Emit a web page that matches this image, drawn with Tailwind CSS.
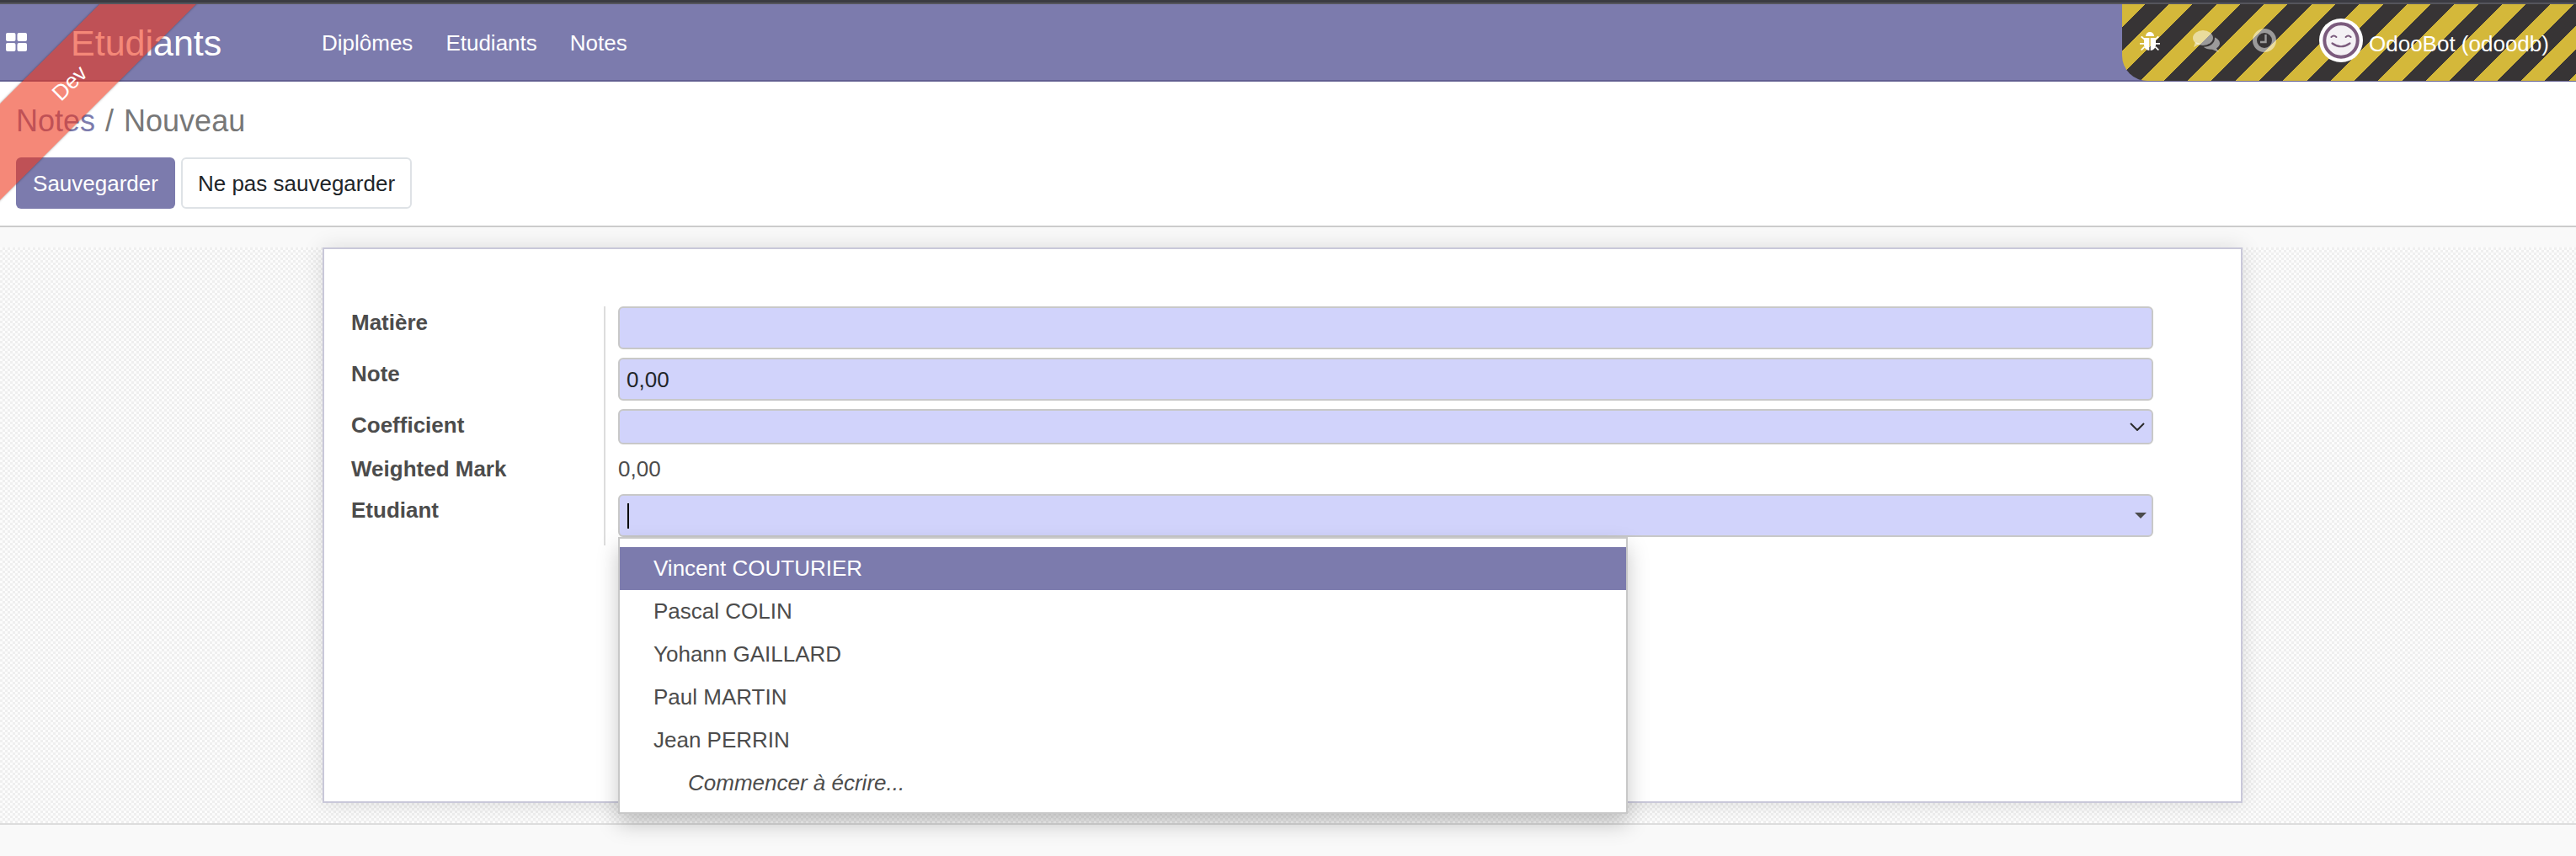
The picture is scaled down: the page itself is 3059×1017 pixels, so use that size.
<!DOCTYPE html>
<html lang="fr">
<head>
    <meta charset="UTF-8">
    <title>Notes / Nouveau</title>
    <script src="https://cdn.jsdelivr.net/npm/@tailwindcss/browser@4"></script>
</head>
<body class="relative h-[1017px] overflow-hidden bg-[#f9f9f9] font-['Liberation_Sans',Arial,sans-serif] text-[26px] text-[#4c4c4c]">
    <!-- top edge -->
    <div class="relative z-20 h-[5px] bg-[#3b3b42] border-b-2 border-[#55555c]"></div>

    <!-- navbar -->
    <header class="flex h-[92px] items-center border-b-2 border-[#625f91] bg-[#7c7bad] text-white">
        <svg class="ml-[7px] h-[22px] w-[25px] shrink-0" viewBox="0 0 25 22" fill="#fff">
            <rect x="0" y="0" width="11.5" height="10" rx="2"/>
            <rect x="13.5" y="0" width="11.5" height="10" rx="2"/>
            <rect x="0" y="12" width="11.5" height="10" rx="2"/>
            <rect x="13.5" y="12" width="11.5" height="10" rx="2"/>
        </svg>
        <span class="ml-[52px] w-[298px] pt-[2px] text-[43px] leading-none">Etudiants</span>
        <nav class="flex gap-[39px] pt-[2px] leading-none">
            <a>Diplômes</a>
            <a>Etudiants</a>
            <a>Notes</a>
        </nav>

        <!-- debug stripes -->
        <div class="ml-auto flex h-[92px] w-[539px] items-center rounded-bl-[30px] bg-[image:repeating-linear-gradient(135deg,#d4b83a_0,#d4b83a_20px,#373435_20px,#373435_40px)] pl-[21px]">
            <svg class="h-[24px] w-[24px] shrink-0 -translate-y-[2px]" viewBox="0 0 24 24" fill="#fff">
                <path d="M7 7 A5 5 0 0 1 17 7 Z"/>
                <path d="M5 9 H11.3 V24 C8 24 5 21 5 17 Z"/>
                <path d="M12.7 9 H19 V17 C19 21 16 24 12.7 24 Z"/>
                <path d="M1 8 L2.5 6.8 L6 10 L4.8 11.2 Z M23 8 L21.5 6.8 L18 10 L19.2 11.2 Z M0 15 H5 V16.8 H0 Z M24 15 H19 V16.8 H24 Z M1 23 L5 19 L6.2 20.2 L2.4 24 Z M23 23 L19 19 L17.8 20.2 L21.6 24 Z"/>
            </svg>
            <svg class="ml-[39px] h-[26px] w-[32px] shrink-0 -translate-y-[1px]" viewBox="0 0 32 26" fill="#fff" fill-opacity=".5">
                <ellipse cx="12" cy="9" rx="12" ry="9"/>
                <path d="M3 14 L1 20 L9 16 Z"/>
                <path d="M26 8.5 C29.5 10 32 12.5 32 15.5 C32 18 30.3 20 28 21.3 L31 26 L23 22.8 C19 23 15 21.8 12.7 19.8 C20 20 26.5 15.5 26 8.5 Z"/>
            </svg>
            <svg class="ml-[39px] h-[28px] w-[28px] shrink-0 -translate-y-[2px]" viewBox="0 0 28 28">
                <circle cx="14" cy="14" r="11.5" fill="none" stroke="#fff" stroke-opacity=".5" stroke-width="5"/>
                <path d="M15.5 7 V16 H9" fill="none" stroke="#fff" stroke-opacity=".5" stroke-width="2.4"/>
            </svg>
            <svg class="ml-[51px] h-[52px] w-[52px] shrink-0 -translate-y-[2px]" viewBox="0 0 52 52">
                <circle cx="26" cy="26" r="26" fill="#fff"/>
                <circle cx="26" cy="26" r="19.7" fill="#f4f1f5" stroke="#7b5b7d" stroke-width="4"/>
                <path d="M14.4 22 Q17.4 19 20.4 22 M31.6 22 Q34.6 19 37.6 22" fill="none" stroke="#7b5b7d" stroke-width="2" stroke-linecap="round"/>
                <path d="M15.5 29.5 Q26 37 36.5 29.5" fill="none" stroke="#7b5b7d" stroke-width="2.2" stroke-linecap="round"/>
            </svg>
            <span class="ml-[7px] whitespace-nowrap pt-[3px] leading-none">OdooBot (odoodb)</span>
        </div>
    </header>

    <!-- control panel -->
    <section class="h-[173px] border-b-2 border-[#cccccc] bg-white pl-[19px]">
        <div class="flex gap-[12px] pt-[26px] text-[36px] leading-[42px] text-[#777777]">
            <span class="text-[#7c7bad]">Notes</span>
            <span>/</span>
            <span>Nouveau</span>
        </div>
        <div class="mt-[22px] flex gap-[7px] leading-none">
            <button class="h-[61px] w-[189px] rounded-[6px] bg-[#7c7bad] text-white">Sauvegarder</button>
            <button class="h-[61px] w-[274px] rounded-[6px] border-2 border-[#dee2e6] bg-white text-[#212529]">Ne pas sauvegarder</button>
        </div>
    </section>

    <!-- form view -->
    <main class="h-[710px] border-b-2 border-[#dddddd] pt-[24px]">
        <div class="h-full bg-[image:repeating-conic-gradient(#efefef_0_25%,#fcfcfc_0_50%)] bg-[length:6px_6px] pl-[383px]">
            <div class="h-[660px] w-[2280px] border-2 border-[#c9c8d9] bg-white pl-[32px] pt-[68px] shadow-[0_0_24px_rgba(0,0,0,0.12)]">
                <div class="grid w-[2140px] grid-cols-[302px_1fr] grid-rows-[61px_61px_52px_49px_61px] leading-none">
                    <div class="border-r-2 border-[#dddddd] pt-[6px] font-bold">Matière</div>
                    <div class="pl-[15px]">
                        <div class="h-[51px] w-[1823px] rounded-[6px] border-2 border-[#c8c8c8] bg-[#d1d3fb]"></div>
                    </div>

                    <div class="border-r-2 border-[#dddddd] pt-[6px] font-bold">Note</div>
                    <div class="pl-[15px]">
                        <div class="flex h-[51px] w-[1823px] items-center rounded-[6px] border-2 border-[#c8c8c8] bg-[#d1d3fb] pl-[8px] text-[#212529]">0,00</div>
                    </div>

                    <div class="border-r-2 border-[#dddddd] pt-[6px] font-bold">Coefficient</div>
                    <div class="pl-[15px]">
                        <div class="flex h-[42px] w-[1823px] items-center justify-end rounded-[6px] border-2 border-[#c8c8c8] bg-[#d1d3fb] pr-[8px]">
                            <svg class="h-[10px] w-[18px]" viewBox="0 0 18 10" fill="none" stroke="#2b2b2b" stroke-width="2"><path d="M1 1 L9 9 L17 1"/></svg>
                        </div>
                    </div>

                    <div class="border-r-2 border-[#dddddd] pt-[6px] font-bold">Weighted Mark</div>
                    <div class="pl-[15px] pt-[6px]">0,00</div>

                    <div class="border-r-2 border-[#dddddd] pt-[6px] font-bold">Etudiant</div>
                    <div class="pl-[15px]">
                        <div class="flex h-[51px] w-[1823px] items-center justify-between rounded-[6px] border-2 border-[#c8c8c8] bg-[#d1d3fb] pl-[9px] pr-[6px]">
                            <span class="h-[30px] w-[2px] bg-black"></span>
                            <svg class="h-[7px] w-[14px]" viewBox="0 0 14 7" fill="#4c4c4c"><path d="M0 0 H14 L7 7 Z"/></svg>
                        </div>
                    </div>
                </div>
            </div>
        </div>
    </main>

    <!-- autocomplete dropdown -->
    <ul class="absolute left-[734px] top-[638px] h-[329px] w-[1199px] border-2 border-[#c8c8c8] bg-white pt-[10px] leading-none shadow-[0_12px_24px_rgba(0,0,0,0.22)]">
        <li class="flex h-[51px] items-center bg-[#7c7bad] pb-[2px] pl-[40px] text-white">Vincent COUTURIER</li>
        <li class="flex h-[51px] items-center pb-[2px] pl-[40px]">Pascal COLIN</li>
        <li class="flex h-[51px] items-center pb-[2px] pl-[40px]">Yohann GAILLARD</li>
        <li class="flex h-[51px] items-center pb-[2px] pl-[40px]">Paul MARTIN</li>
        <li class="flex h-[51px] items-center pb-[2px] pl-[40px]">Jean PERRIN</li>
        <li class="flex h-[51px] items-center pb-[2px] pl-[81px] italic">Commencer à écrire...</li>
    </ul>

    <!-- Dev ribbon -->
    <div class="absolute left-[-110px] top-[50px] z-10 flex h-[81px] w-[400px] -rotate-45 items-center justify-center bg-[rgba(238,52,26,0.59)] pr-[22px] leading-none text-white shadow-[0_0_3px_rgba(0,0,0,0.35)]">Dev</div>
</body>
</html>
